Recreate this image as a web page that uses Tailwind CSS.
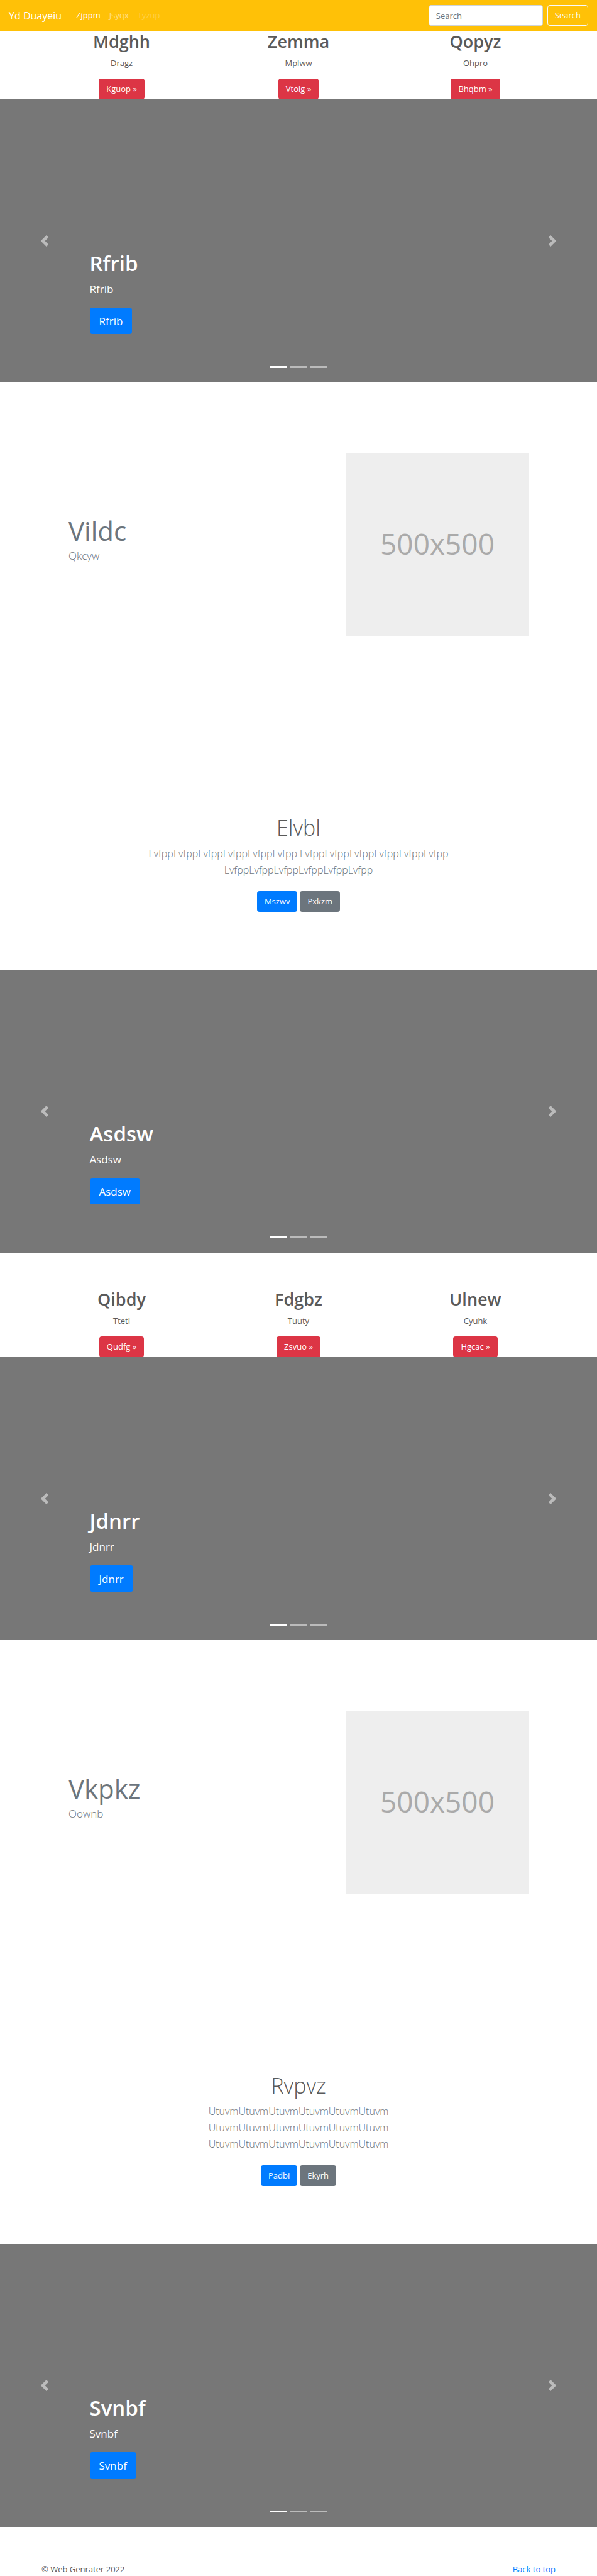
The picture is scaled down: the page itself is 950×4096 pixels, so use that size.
<!DOCTYPE html>
<html lang="en">
<head>
<meta charset="utf-8">
<meta name="viewport" content="width=device-width, initial-scale=1">
<title>Yd Duayeiu</title>
<script src="https://cdn.jsdelivr.net/npm/@tailwindcss/browser@4"></script>
</head>
<body id="top" class="bg-white font-['Open_Sans','Noto_Sans',sans-serif] text-[13px] leading-[21px] text-[#5a5a5a]">

<header class="flex h-[49px] items-center justify-between bg-[#ffc107] px-3.5 text-white">
  <nav aria-label="Main" class="flex items-center">
    <a href="#" class="mr-4 text-[16px] leading-[26px]">Yd Duayeiu</a>
    <a href="#" class="px-[7px]">Zjppm</a>
    <a href="#" class="px-[7px] text-white/50">Jsyqx</a>
    <a href="#" aria-disabled="true" class="px-[7px] text-white/25">Tyzup</a>
  </nav>
  <form role="search" class="flex gap-[7px]">
    <input type="search" placeholder="Search" aria-label="Search" class="h-[33px] w-[182px] rounded border border-[#ced4da] bg-white px-[11px] text-[#495057] placeholder:text-[#6c757d]">
    <button type="button" class="h-[33px] rounded border border-[#f8f9fa] px-[11px] text-[#f8f9fa]">Search</button>
  </form>
</header>

<main>
  <section class="mx-auto grid w-8/9 grid-cols-3 text-center">
    <div>
      <h2 class="mb-[7px] text-[27px] leading-[34px] font-semibold">Mdghh</h2>
      <p class="mb-3.5">Dragz</p>
      <a href="#" class="inline-flex h-[33px] items-center rounded bg-[#dc3545] px-3 align-top text-white">Kguop »</a>
    </div>
    <div>
      <h2 class="mb-[7px] text-[27px] leading-[34px] font-semibold">Zemma</h2>
      <p class="mb-3.5">Mplww</p>
      <a href="#" class="inline-flex h-[33px] items-center rounded bg-[#dc3545] px-3 align-top text-white">Vtoig »</a>
    </div>
    <div>
      <h2 class="mb-[7px] text-[27px] leading-[34px] font-semibold">Qopyz</h2>
      <p class="mb-3.5">Ohpro</p>
      <a href="#" class="inline-flex h-[33px] items-center rounded bg-[#dc3545] px-3 align-top text-white">Bhqbm »</a>
    </div>
  </section>

  <section aria-label="Rfrib" class="relative flex h-[450px] flex-col items-start justify-end bg-[#777] px-[15%] pb-[77px] text-white">
    <h1 class="mb-[7px] text-[33px] leading-[42px] font-semibold">Rfrib</h1>
    <p class="mb-4 text-[17px] leading-[26px]">Rfrib</p>
    <a href="#" class="flex h-[42px] items-center rounded-[4px] bg-[#007bff] px-[15px] text-[17px]">Rfrib</a>
    <button type="button" aria-label="Previous" class="absolute inset-y-0 left-0 flex w-[15%] items-center justify-center opacity-50"><svg class="size-[18px]" viewBox="0 0 8 8" fill="#fff"><path d="M5.25 0l-4 4 4 4 1.5-1.5-2.5-2.5 2.5-2.5-1.5-1.5z"/></svg></button>
    <button type="button" aria-label="Next" class="absolute inset-y-0 right-0 flex w-[15%] items-center justify-center opacity-50"><svg class="size-[18px]" viewBox="0 0 8 8" fill="#fff"><path d="M2.75 0l-1.5 1.5 2.5 2.5-2.5 2.5 1.5 1.5 4-4-4-4z"/></svg></button>
    <div class="absolute inset-x-0 bottom-[23px] flex justify-center gap-1.5">
      <button type="button" aria-label="Slide 1" class="h-[3px] w-[26px] bg-white"></button>
      <button type="button" aria-label="Slide 2" class="h-[3px] w-[26px] bg-white/50"></button>
      <button type="button" aria-label="Slide 3" class="h-[3px] w-[26px] bg-white/50"></button>
    </div>
  </section>

  <section class="flex items-center justify-between px-[109px] pt-[113px] pb-[127px]">
    <div class="pb-[18px] text-[#6c757d]">
      <h2 class="text-[42px] leading-[54px]">Vildc</h2>
      <p class="text-[17px] leading-[26px] font-light">Qkcyw</p>
    </div>
    <div role="img" aria-label="500x500" class="flex size-[290px] items-center justify-center bg-[#eee] pb-1 text-[46px] text-[#aaa]">500x500</div>
  </section>

  <hr class="border-t border-black/10">

  <section class="px-[218px] pt-[156px] pb-[92px] text-center">
    <h1 class="mb-[7px] text-[34px] leading-[42px] font-light">Elvbl</h1>
    <p class="mb-[21px] text-[16px] leading-[26px] font-light text-[#6c757d]">LvfppLvfppLvfppLvfppLvfppLvfpp LvfppLvfppLvfppLvfppLvfppLvfpp LvfppLvfppLvfppLvfppLvfppLvfpp</p>
    <div class="flex justify-center gap-1">
      <a href="#" class="flex h-[33px] items-center rounded bg-[#007bff] px-3 text-white">Mszwv</a>
      <a href="#" class="flex h-[33px] items-center rounded bg-[#6c757d] px-3 text-white">Pxkzm</a>
    </div>
  </section>

  <section aria-label="Asdsw" class="relative flex h-[450px] flex-col items-start justify-end bg-[#777] px-[15%] pb-[77px] text-white">
    <h1 class="mb-[7px] text-[33px] leading-[42px] font-semibold">Asdsw</h1>
    <p class="mb-4 text-[17px] leading-[26px]">Asdsw</p>
    <a href="#" class="flex h-[42px] items-center rounded-[4px] bg-[#007bff] px-[15px] text-[17px]">Asdsw</a>
    <button type="button" aria-label="Previous" class="absolute inset-y-0 left-0 flex w-[15%] items-center justify-center opacity-50"><svg class="size-[18px]" viewBox="0 0 8 8" fill="#fff"><path d="M5.25 0l-4 4 4 4 1.5-1.5-2.5-2.5 2.5-2.5-1.5-1.5z"/></svg></button>
    <button type="button" aria-label="Next" class="absolute inset-y-0 right-0 flex w-[15%] items-center justify-center opacity-50"><svg class="size-[18px]" viewBox="0 0 8 8" fill="#fff"><path d="M2.75 0l-1.5 1.5 2.5 2.5-2.5 2.5 1.5 1.5 4-4-4-4z"/></svg></button>
    <div class="absolute inset-x-0 bottom-[23px] flex justify-center gap-1.5">
      <button type="button" aria-label="Slide 1" class="h-[3px] w-[26px] bg-white"></button>
      <button type="button" aria-label="Slide 2" class="h-[3px] w-[26px] bg-white/50"></button>
      <button type="button" aria-label="Slide 3" class="h-[3px] w-[26px] bg-white/50"></button>
    </div>
  </section>

  <section class="mx-auto grid w-8/9 grid-cols-3 pt-[57px] text-center">
    <div>
      <h2 class="mb-[7px] text-[27px] leading-[34px] font-semibold">Qibdy</h2>
      <p class="mb-3.5">Ttetl</p>
      <a href="#" class="inline-flex h-[33px] items-center rounded bg-[#dc3545] px-3 align-top text-white">Qudfg »</a>
    </div>
    <div>
      <h2 class="mb-[7px] text-[27px] leading-[34px] font-semibold">Fdgbz</h2>
      <p class="mb-3.5">Tuuty</p>
      <a href="#" class="inline-flex h-[33px] items-center rounded bg-[#dc3545] px-3 align-top text-white">Zsvuo »</a>
    </div>
    <div>
      <h2 class="mb-[7px] text-[27px] leading-[34px] font-semibold">Ulnew</h2>
      <p class="mb-3.5">Cyuhk</p>
      <a href="#" class="inline-flex h-[33px] items-center rounded bg-[#dc3545] px-3 align-top text-white">Hgcac »</a>
    </div>
  </section>

  <section aria-label="Jdnrr" class="relative flex h-[450px] flex-col items-start justify-end bg-[#777] px-[15%] pb-[77px] text-white">
    <h1 class="mb-[7px] text-[33px] leading-[42px] font-semibold">Jdnrr</h1>
    <p class="mb-4 text-[17px] leading-[26px]">Jdnrr</p>
    <a href="#" class="flex h-[42px] items-center rounded-[4px] bg-[#007bff] px-[15px] text-[17px]">Jdnrr</a>
    <button type="button" aria-label="Previous" class="absolute inset-y-0 left-0 flex w-[15%] items-center justify-center opacity-50"><svg class="size-[18px]" viewBox="0 0 8 8" fill="#fff"><path d="M5.25 0l-4 4 4 4 1.5-1.5-2.5-2.5 2.5-2.5-1.5-1.5z"/></svg></button>
    <button type="button" aria-label="Next" class="absolute inset-y-0 right-0 flex w-[15%] items-center justify-center opacity-50"><svg class="size-[18px]" viewBox="0 0 8 8" fill="#fff"><path d="M2.75 0l-1.5 1.5 2.5 2.5-2.5 2.5 1.5 1.5 4-4-4-4z"/></svg></button>
    <div class="absolute inset-x-0 bottom-[23px] flex justify-center gap-1.5">
      <button type="button" aria-label="Slide 1" class="h-[3px] w-[26px] bg-white"></button>
      <button type="button" aria-label="Slide 2" class="h-[3px] w-[26px] bg-white/50"></button>
      <button type="button" aria-label="Slide 3" class="h-[3px] w-[26px] bg-white/50"></button>
    </div>
  </section>

  <section class="flex items-center justify-between px-[109px] pt-[113px] pb-[127px]">
    <div class="pb-[18px] text-[#6c757d]">
      <h2 class="text-[42px] leading-[54px]">Vkpkz</h2>
      <p class="text-[17px] leading-[26px] font-light">Oownb</p>
    </div>
    <div role="img" aria-label="500x500" class="flex size-[290px] items-center justify-center bg-[#eee] pb-1 text-[46px] text-[#aaa]">500x500</div>
  </section>

  <hr class="border-t border-black/10">

  <section class="px-[218px] pt-[156px] pb-[92px] text-center">
    <h1 class="mb-[7px] text-[34px] leading-[42px] font-light">Rvpvz</h1>
    <p class="mb-[21px] text-[16px] leading-[26px] font-light text-[#6c757d]">UtuvmUtuvmUtuvmUtuvmUtuvmUtuvm UtuvmUtuvmUtuvmUtuvmUtuvmUtuvm UtuvmUtuvmUtuvmUtuvmUtuvmUtuvm</p>
    <div class="flex justify-center gap-1">
      <a href="#" class="flex h-[33px] items-center rounded bg-[#007bff] px-3 text-white">Padbi</a>
      <a href="#" class="flex h-[33px] items-center rounded bg-[#6c757d] px-3 text-white">Ekyrh</a>
    </div>
  </section>

  <section aria-label="Svnbf" class="relative flex h-[450px] flex-col items-start justify-end bg-[#777] px-[15%] pb-[77px] text-white">
    <h1 class="mb-[7px] text-[33px] leading-[42px] font-semibold">Svnbf</h1>
    <p class="mb-4 text-[17px] leading-[26px]">Svnbf</p>
    <a href="#" class="flex h-[42px] items-center rounded-[4px] bg-[#007bff] px-[15px] text-[17px]">Svnbf</a>
    <button type="button" aria-label="Previous" class="absolute inset-y-0 left-0 flex w-[15%] items-center justify-center opacity-50"><svg class="size-[18px]" viewBox="0 0 8 8" fill="#fff"><path d="M5.25 0l-4 4 4 4 1.5-1.5-2.5-2.5 2.5-2.5-1.5-1.5z"/></svg></button>
    <button type="button" aria-label="Next" class="absolute inset-y-0 right-0 flex w-[15%] items-center justify-center opacity-50"><svg class="size-[18px]" viewBox="0 0 8 8" fill="#fff"><path d="M2.75 0l-1.5 1.5 2.5 2.5-2.5 2.5 1.5 1.5 4-4-4-4z"/></svg></button>
    <div class="absolute inset-x-0 bottom-[23px] flex justify-center gap-1.5">
      <button type="button" aria-label="Slide 1" class="h-[3px] w-[26px] bg-white"></button>
      <button type="button" aria-label="Slide 2" class="h-[3px] w-[26px] bg-white/50"></button>
      <button type="button" aria-label="Slide 3" class="h-[3px] w-[26px] bg-white/50"></button>
    </div>
  </section>
</main>

<footer class="flex justify-between px-[66px] pt-[57px]">
  <p>© Web Genrater 2022</p>
  <a href="#top" class="text-[#007bff]">Back to top</a>
</footer>

</body>
</html>
